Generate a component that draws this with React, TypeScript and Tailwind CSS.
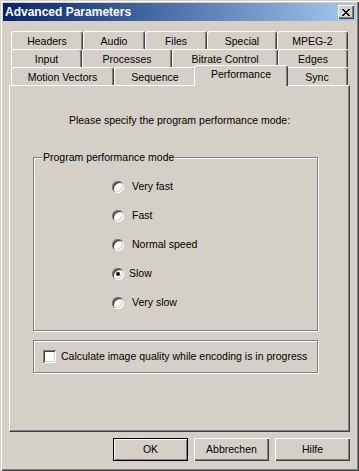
import React from "react";

const FONT = "font-['Liberation_Sans',Arial,sans-serif]";

type TabDef = { label: string; w: string; selected?: boolean };

const rows: TabDef[][] = [
  [
    { label: "Headers", w: "w-[72px]" },
    { label: "Audio", w: "w-[62px]" },
    { label: "Files", w: "w-[62px]" },
    { label: "Special", w: "w-[70px]" },
    { label: "MPEG-2", w: "w-[71px]" },
  ],
  [
    { label: "Input", w: "w-[71px]" },
    { label: "Processes", w: "w-[90px]" },
    { label: "Bitrate Control", w: "w-[106px]" },
    { label: "Edges", w: "w-[70px]" },
  ],
  [
    { label: "Motion Vectors", w: "w-[103px]" },
    { label: "Sequence", w: "w-[82px]" },
    { label: "Performance", w: "w-[94px]", selected: true },
    { label: "Sync", w: "w-[62px]" },
  ],
];

function Tab({ t }: { t: TabDef }) {
  if (t.selected) {
    return (
      <div
        className={`relative z-10 -mx-[2px] -mt-[2px] flex h-[21px] shrink-0 items-start justify-center rounded-t-[3px] border-l border-r border-t border-l-white border-r-[#404040] border-t-white bg-[#d4d0c8] pt-[2px] shadow-[inset_-1px_0_#808080] ${t.w}`}
      >
        <span className="leading-[13px]">{t.label}</span>
      </div>
    );
  }
  return (
    <div
      className={`flex h-[18px] shrink-0 items-start justify-center rounded-t-[3px] border-l border-r border-t border-l-white border-r-[#404040] border-t-white bg-[#d4d0c8] pt-[3px] shadow-[inset_-1px_0_#808080] ${t.w}`}
    >
      <span className="leading-[13px]">{t.label}</span>
    </div>
  );
}

function Radio({ checked }: { checked?: boolean }) {
  return (
    <div className="flex h-[12px] w-[12px] shrink-0 items-center justify-center rounded-full bg-white shadow-[inset_1px_1px_#808080,inset_-1px_-1px_#ffffff,inset_2px_2px_#404040,inset_-2px_-2px_#d4d0c8]">
      {checked && <div className="h-[4px] w-[4px] rounded-full bg-black" />}
    </div>
  );
}

function CloseGlyph() {
  const px = [
    "XX....XX",
    ".XX..XX.",
    "..XXXX..",
    "...XX...",
    "..XXXX..",
    ".XX..XX.",
    "XX....XX",
  ];
  const rects: React.ReactNode[] = [];
  px.forEach((row, y) =>
    row.split("").forEach((c, x) => {
      if (c === "X") rects.push(<rect key={`${x}-${y}`} x={x} y={y} width={1} height={1} fill="#000" />);
    })
  );
  return (
    <svg width="8" height="7" viewBox="0 0 8 7" shapeRendering="crispEdges">
      {rects}
    </svg>
  );
}

function Button({ label, isDefault }: { label: string; isDefault?: boolean }) {
  if (isDefault) {
    return (
      <div className="flex h-[23px] w-[75px] items-center justify-center border border-black bg-[#d4d0c8] shadow-[inset_1px_1px_#ffffff,inset_-1px_-1px_#808080]">
        <span className="leading-[13px]">{label}</span>
      </div>
    );
  }
  return (
    <div className="flex h-[23px] w-[75px] items-center justify-center bg-[#d4d0c8] shadow-[inset_1px_1px_#ffffff,inset_-1px_-1px_#404040,inset_-2px_-2px_#808080]">
      <span className="leading-[13px]">{label}</span>
    </div>
  );
}

const options = [
  { label: "Very fast" },
  { label: "Fast" },
  { label: "Normal speed" },
  { label: "Slow", checked: true },
  { label: "Very slow" },
];

export default function App() {
  return (
    <div
      className={`${FONT} flex h-[471px] w-[359px] flex-col bg-[#d4d0c8] p-[3px] text-[10.5px] text-black shadow-[inset_1px_1px_#d4d0c8,inset_2px_2px_#ffffff,inset_-1px_-1px_#404040,inset_-2px_-2px_#808080]`}
    >
      {/* Title bar */}
      <div className="flex h-[18px] shrink-0 items-center justify-between bg-linear-to-r from-[#0a246a] to-[#a6caf0] pl-[2px] pr-[2px]">
        <span className="text-[12px] font-bold leading-[14px] text-white">Advanced Parameters</span>
        <div className="flex h-[14px] w-[16px] items-center justify-center bg-[#d4d0c8] shadow-[inset_1px_1px_#ffffff,inset_-1px_-1px_#404040,inset_-2px_-2px_#808080]">
          <CloseGlyph />
        </div>
      </div>

      <div className="flex flex-col px-[6px] pt-[10px]">
        {/* Tabs */}
        <div className="flex flex-col pl-[2px]">
          {rows.map((r, i) => (
            <div key={i} className="flex h-[18px]">
              {r.map((t) => (
                <Tab key={t.label} t={t} />
              ))}
            </div>
          ))}
        </div>

        {/* Panel */}
        <div className="flex h-[347px] flex-col border-b border-l border-r border-t border-b-[#404040] border-l-white border-r-[#404040] border-t-white shadow-[inset_-1px_-1px_#808080]">
          <div className="mt-[28px] h-[13px] text-center leading-[13px]">
            Please specify the program performance mode:
          </div>

          <div className="relative ml-[23px] mt-[30px] h-[174px] w-[285px] border border-[#808080] shadow-[inset_1px_1px_#ffffff,1px_1px_#ffffff]">
            <span className="absolute -top-[7px] left-[8px] bg-[#d4d0c8] px-[1px] leading-[13px]">
              Program performance mode
            </span>
            <div className="flex flex-col pl-[78px] pt-[14px]">
              {options.map((o) => (
                <div key={o.label} className="flex h-[29px] items-center">
                  <Radio checked={o.checked} />
                  <span className={`${o.checked ? "ml-[5px]" : "ml-[8px]"} leading-[13px]`}>{o.label}</span>
                </div>
              ))}
            </div>
          </div>

          <div className="ml-[23px] mt-[9px] flex h-[33px] w-[285px] items-center border border-[#808080] pl-[9px] shadow-[inset_1px_1px_#ffffff,1px_1px_#ffffff]">
            <div className="h-[13px] w-[13px] shrink-0 bg-white shadow-[inset_1px_1px_#808080,inset_-1px_-1px_#ffffff,inset_2px_2px_#404040,inset_-2px_-2px_#d4d0c8]" />
            <span className="ml-[5px] leading-[13px]">Calculate image quality while encoding is in progress</span>
          </div>
        </div>

        {/* Buttons */}
        <div className="mt-[6px] flex justify-end gap-[6px]">
          <Button label="OK" isDefault />
          <Button label="Abbrechen" />
          <Button label="Hilfe" />
        </div>
      </div>
    </div>
  );
}
